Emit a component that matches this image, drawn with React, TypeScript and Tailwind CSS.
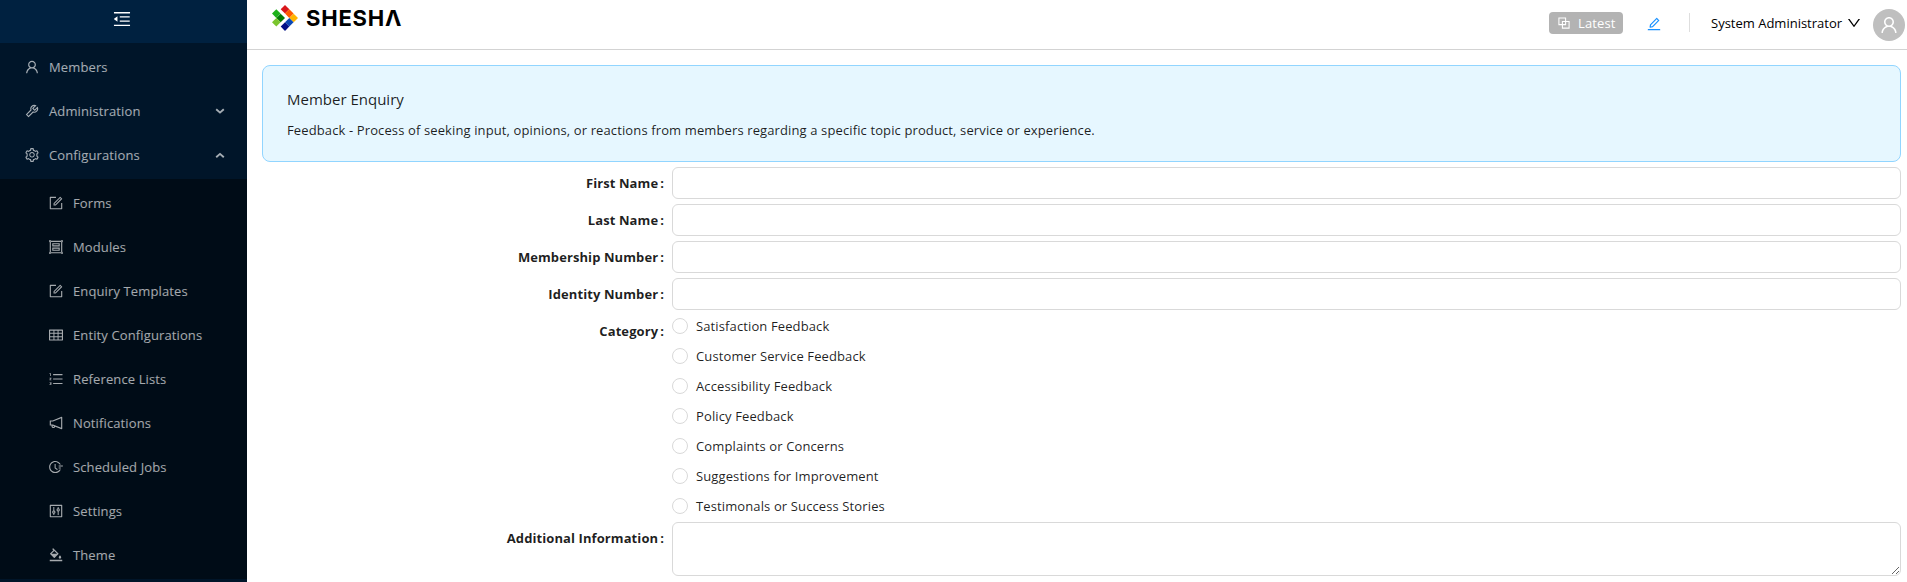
import type { ComponentType, ReactNode, SVGProps } from "react";
import {
  AiOutlineBgColors,
  AiOutlineBlock,
  AiOutlineControl,
  AiOutlineDown,
  AiOutlineEdit,
  AiOutlineFieldTime,
  AiOutlineForm,
  AiOutlineGroup,
  AiOutlineMenuFold,
  AiOutlineNotification,
  AiOutlineOrderedList,
  AiOutlineSetting,
  AiOutlineTable,
  AiOutlineTool,
  AiOutlineUser,
} from "react-icons/ai";

type IconProps = SVGProps<SVGSVGElement> & { size?: number };

// Crops the blank margin that surrounds each glyph in the icon set.
const ICON_BOX = "64 64 896 896";

const configItems: { label: string; icon: ComponentType<IconProps> }[] = [
  { label: "Forms", icon: AiOutlineForm },
  { label: "Modules", icon: AiOutlineGroup },
  { label: "Enquiry Templates", icon: AiOutlineForm },
  { label: "Entity Configurations", icon: AiOutlineTable },
  { label: "Reference Lists", icon: AiOutlineOrderedList },
  { label: "Notifications", icon: AiOutlineNotification },
  { label: "Scheduled Jobs", icon: AiOutlineFieldTime },
  { label: "Settings", icon: AiOutlineControl },
  { label: "Theme", icon: AiOutlineBgColors },
];

const categories = [
  "Satisfaction Feedback",
  "Customer Service Feedback",
  "Accessibility Feedback",
  "Policy Feedback",
  "Complaints or Concerns",
  "Suggestions for Improvement",
  "Testimonals or Success Stories",
];

function Arrow({ up }: { up?: boolean }) {
  return (
    <svg width="10" height="7" viewBox="0 0 10 7" fill="none" stroke="currentColor" strokeWidth="1.9" className="mr-[22px]">
      <path d={up ? "M1.200 5.300 5 1.900 8.800 5.300" : "M1.200 1.200 5 4.600 8.800 1.200"} />
    </svg>
  );
}

function MenuItem({ icon: Icon, label, nested, children }: { icon: ComponentType<IconProps>; label: string; nested?: boolean; children?: ReactNode }) {
  return (
    <li className={`my-1 flex h-10 items-center ${nested ? "pl-[49px]" : "pl-[25px]"}`}>
      <Icon size={14} viewBox={ICON_BOX} />
      <span className="ml-[10px] flex-1">{label}</span>
      {children}
    </li>
  );
}

function Sidebar() {
  return (
    <aside className="flex h-[582px] w-[247px] shrink-0 flex-col bg-[#001529] text-white/65">
      <div className="flex h-[43px] shrink-0 items-center justify-center bg-[#002140] pr-[3px] pb-[5px] text-white">
        <AiOutlineMenuFold size={18} viewBox={ICON_BOX} />
      </div>
      <ul className="flow-root shrink-0">
        <MenuItem icon={AiOutlineUser} label="Members" />
        <MenuItem icon={AiOutlineTool} label="Administration">
          <Arrow />
        </MenuItem>
        <MenuItem icon={AiOutlineSetting} label="Configurations">
          <Arrow up />
        </MenuItem>
      </ul>
      <ul className="flow-root h-[400px] shrink-0 bg-[#000c17]">
        {configItems.map((item) => (
          <MenuItem key={item.label} nested {...item} />
        ))}
      </ul>
    </aside>
  );
}

function Logo() {
  return (
    <div className="flex items-center">
      <svg width="26" height="26" viewBox="0 0 26 26">
        <path d="M13 0l4.300 4.300L13 8.600 8.700 4.300z" fill="#d9161b" />
        <path d="M17.300 4.300l4.300 4.300-4.300 4.300L13 8.600z" fill="#ff5a00" />
        <path d="M21.700 8.700L26 13l-4.300 4.300L17.300 13z" fill="#ffb400" />
        <path d="M17.300 13l4.300 4.300-4.300 4.300L13 17.300z" fill="#0a47b4" />
        <path d="M13 17.300l4.300 4.300L13 26l-4.300-4.400z" fill="#000f87" />
        <path d="M4.300 4.300l4.300 4.300-4.300 4.300L0 8.600z" fill="#1db11a" />
        <path d="M8.700 8.700L13 13l-4.300 4.300L4.300 13z" fill="#057a07" />
        <path d="M4.300 13l4.300 4.300-4.300 4.300L0 17.300z" fill="#7ac52e" />
      </svg>
      <span className="ml-[8px] font-['Inter'] text-[22px] leading-[26px] font-bold tracking-[0.8px] text-black">SHESHΛ</span>
    </div>
  );
}

function Header() {
  return (
    <header className="flex h-[50px] items-start justify-between border-b border-[#d3d3d3] bg-white pr-[2px] pl-[25px]">
      <div className="pt-[5px]">
        <Logo />
      </div>
      <div className="flex items-start">
        <div className="mt-[12px] flex h-[22px] w-[74px] items-center rounded bg-[#b3b3b3] pl-[8px] text-white">
          <AiOutlineBlock size={14} viewBox={ICON_BOX} />
          <span className="ml-[7px]">Latest</span>
        </div>
        <AiOutlineEdit size={14} viewBox={ICON_BOX} className="mt-[17px] ml-[24px] text-[#1890ff]" />
        <div className="mt-[13px] ml-[28px] h-[19px] w-px bg-[#dedede]" />
        <div className="mt-[12px] ml-[21px] flex h-[22px] items-center text-black">
          <span className="w-[132px] whitespace-nowrap tracking-normal">System Administrator</span>
          <AiOutlineDown size={14} viewBox={ICON_BOX} className="ml-[4px]" />
        </div>
        <div className="mt-[9px] ml-[12px] flex size-8 items-center justify-center rounded-full bg-[#bfbfbf] text-white">
          <AiOutlineUser size={18} viewBox={ICON_BOX} />
        </div>
      </div>
    </header>
  );
}

function Field({ label, children }: { label: string; children: ReactNode }) {
  return (
    <div className="flex items-start">
      <label className="mr-2 flex h-8 w-[402px] shrink-0 items-center justify-end font-bold tracking-[0.09px]">
        {label}
        <span className="ml-[2px]">:</span>
      </label>
      <div className="flex flex-1 flex-col">{children}</div>
    </div>
  );
}

export default function App() {
  return (
    <div className="flex h-[582px] w-full overflow-hidden bg-white font-['Open_Sans','Noto_Sans',sans-serif] text-[13px] leading-[22px] tracking-[0.12px] text-black/88">
      <Sidebar />
      <main className="flex min-w-0 flex-1 flex-col">
        <Header />
        <div className="flex flex-col gap-[5px] pt-[15px] pr-[6px] pl-[15px]">
          <section className="h-[97px] rounded-lg border border-[#91d5ff] bg-[#e6f7ff] px-6 pt-[21px]">
            <h1 className="text-[15px] leading-6 tracking-normal">Member Enquiry</h1>
            <p className="mt-[8px]">
              Feedback - Process of seeking input, opinions, or reactions from members regarding a specific topic product, service or experience.
            </p>
          </section>
          {["First Name", "Last Name", "Membership Number", "Identity Number"].map((label) => (
            <Field key={label} label={label}>
              <input type="text" className="h-8 rounded-md border border-[#d9d9d9] px-3 outline-none" />
            </Field>
          ))}
          <Field label="Category">
            <div className="flex flex-col gap-2">
              {categories.map((category) => (
                <div key={category} className="flex h-[22px] items-center">
                  <span className="size-4 rounded-full border border-[#d9d9d9]" />
                  <span className="ml-2">{category}</span>
                </div>
              ))}
            </div>
          </Field>
          <Field label="Additional Information">
            <textarea className="h-[54px] resize-y rounded-md border border-[#d9d9d9] px-3 outline-none" />
          </Field>
        </div>
      </main>
    </div>
  );
}
